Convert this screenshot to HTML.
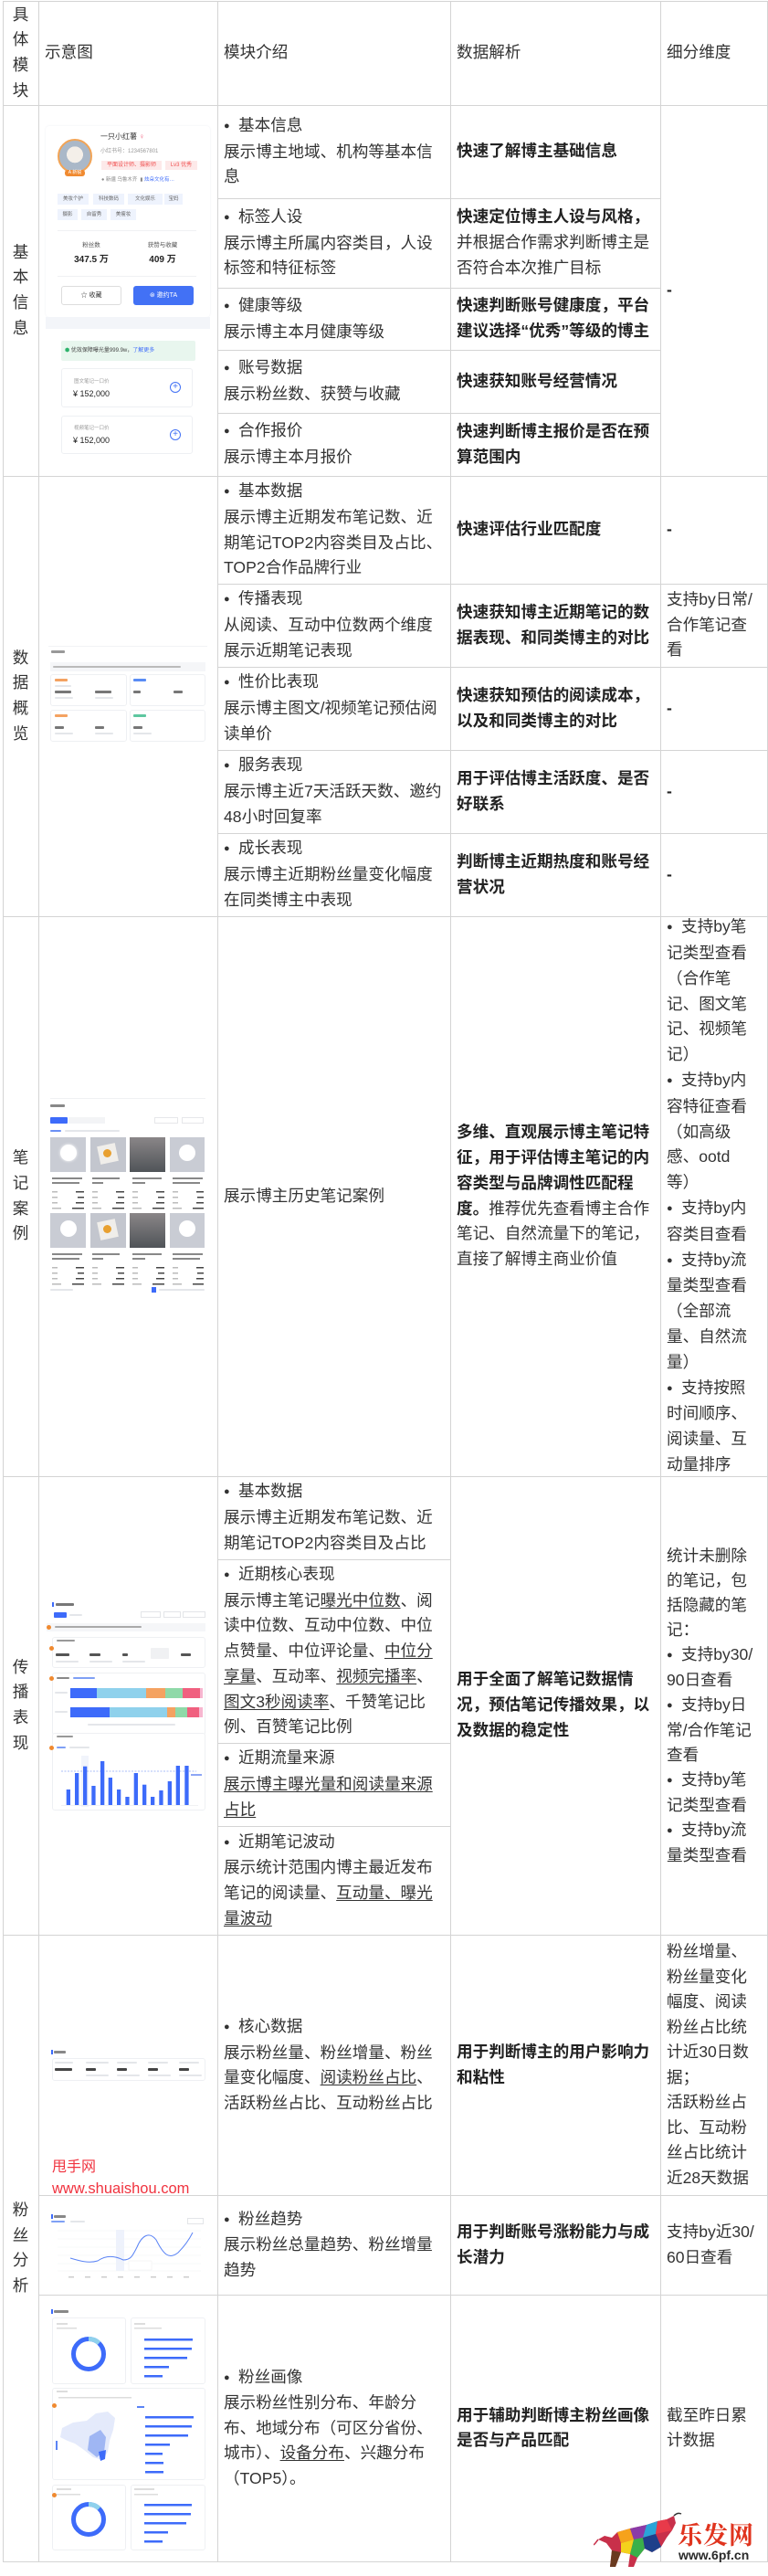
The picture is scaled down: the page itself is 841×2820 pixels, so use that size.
<!DOCTYPE html>
<html><head><meta charset="utf-8">
<style>
*{margin:0;padding:0;box-sizing:border-box}
body{width:841px;height:2820px;background:#fff;position:relative;overflow:hidden;font-family:"Liberation Sans","Noto Sans CJK SC",sans-serif;color:#333}
.h{position:absolute;height:1px;background:#d4d4d4}
.v{position:absolute;width:1px;background:#d4d4d4}
.t{position:absolute;display:flex;flex-direction:column;justify-content:center;padding-left:7px;font-size:17.6px;line-height:27.7px;white-space:nowrap;letter-spacing:0}
.c0{text-align:center;padding-left:0;align-items:center}
.bd{font-weight:bold;color:#222}
.b{display:inline-block;width:16px;font-size:11px;vertical-align:2px}
u{text-decoration:underline;text-underline-offset:2px}
.a{position:absolute}
.g{position:absolute;background:#e4e6ea;border-radius:1px}
.tx{position:absolute;font-size:7px;line-height:8px;white-space:nowrap;color:#555}
.bx{position:absolute;border:1px solid #eef0f3;border-radius:3px;background:#fff}
</style></head><body>

<!-- grid lines -->
<div class="h" style="left:3px;width:838px;top:1px"></div>
<div class="h" style="left:3px;width:838px;top:115px"></div>
<div class="h" style="left:238px;width:485px;top:217px"></div>
<div class="h" style="left:238px;width:485px;top:315px"></div>
<div class="h" style="left:238px;width:485px;top:383px"></div>
<div class="h" style="left:238px;width:485px;top:452px"></div>
<div class="h" style="left:3px;width:838px;top:521px"></div>
<div class="h" style="left:238px;width:603px;top:639px"></div>
<div class="h" style="left:238px;width:603px;top:730px"></div>
<div class="h" style="left:238px;width:603px;top:821px"></div>
<div class="h" style="left:238px;width:603px;top:912px"></div>
<div class="h" style="left:3px;width:838px;top:1003px"></div>
<div class="h" style="left:3px;width:838px;top:1616px"></div>
<div class="h" style="left:238px;width:255px;top:1707px"></div>
<div class="h" style="left:238px;width:255px;top:1908px"></div>
<div class="h" style="left:238px;width:255px;top:1999px"></div>
<div class="h" style="left:3px;width:838px;top:2118px"></div>
<div class="h" style="left:42px;width:799px;top:2403px"></div>
<div class="h" style="left:42px;width:799px;top:2512px"></div>
<div class="h" style="left:3px;width:838px;top:2804px"></div>
<div class="v" style="left:3px;top:1px;height:2804px"></div>
<div class="v" style="left:42px;top:1px;height:2804px"></div>
<div class="v" style="left:238px;top:1px;height:2804px"></div>
<div class="v" style="left:493px;top:1px;height:2804px"></div>
<div class="v" style="left:723px;top:1px;height:2804px"></div>
<div class="v" style="left:840px;top:1px;height:2804px"></div>

<!-- header -->
<div class="t c0" style="left:3px;top:1px;width:39px;height:114px"><div>具<br>体<br>模<br>块</div></div>
<div class="t" style="left:42px;top:1px;width:196px;height:114px"><div>示意图</div></div>
<div class="t" style="left:238px;top:1px;width:255px;height:114px"><div>模块介绍</div></div>
<div class="t" style="left:493px;top:1px;width:230px;height:114px"><div>数据解析</div></div>
<div class="t" style="left:723px;top:1px;width:117px;height:114px"><div>细分维度</div></div>

<!-- row 1 -->
<div class="t c0" style="left:3px;top:115px;width:39px;height:406px"><div>基<br>本<br>信<br>息</div></div>
<div class="t" style="left:238px;top:115px;width:255px;height:102px"><div><span class="b">●</span>基本信息<br>展示博主地域、机构等基本信<br>息</div></div>
<div class="t" style="left:238px;top:217px;width:255px;height:98px"><div><span class="b">●</span>标签人设<br>展示博主所属内容类目，人设<br>标签和特征标签</div></div>
<div class="t" style="left:238px;top:315px;width:255px;height:68px"><div><span class="b">●</span>健康等级<br>展示博主本月健康等级</div></div>
<div class="t" style="left:238px;top:383px;width:255px;height:69px"><div><span class="b">●</span>账号数据<br>展示粉丝数、获赞与收藏</div></div>
<div class="t" style="left:238px;top:452px;width:255px;height:69px"><div><span class="b">●</span>合作报价<br>展示博主本月报价</div></div>
<div class="t bd" style="left:493px;top:115px;width:230px;height:102px"><div>快速了解博主基础信息</div></div>
<div class="t" style="left:493px;top:217px;width:230px;height:98px"><div><span class="bd">快速定位博主人设与风格，</span><br>并根据合作需求判断博主是<br>否符合本次推广目标</div></div>
<div class="t bd" style="left:493px;top:315px;width:230px;height:68px"><div>快速判断账号健康度，平台<br>建议选择“优秀”等级的博主</div></div>
<div class="t bd" style="left:493px;top:383px;width:230px;height:69px"><div>快速获知账号经营情况</div></div>
<div class="t bd" style="left:493px;top:452px;width:230px;height:69px"><div>快速判断博主报价是否在预<br>算范围内</div></div>
<div class="t bd" style="left:723px;top:115px;width:117px;height:406px"><div>-</div></div>

<!-- row1 mockup -->
<div class="a" style="left:50px;top:138px;width:180px;height:209px;background:#fff;border-radius:4px;box-shadow:0 0 2px #eceef2"></div>
<div class="a" style="left:50px;top:347px;width:180px;height:13px;background:#f3f5f9"></div>
<div class="a" style="left:63px;top:152px;width:38px;height:38px;border-radius:50%;border:2px solid #f2a456;background:radial-gradient(circle at 50% 45%,#f4efe9 0 35%,#aab8c8 36% 100%)"></div>
<div class="a" style="left:71px;top:186px;width:22px;height:7px;background:#f08a30;border-radius:3px;color:#fff;font-size:5px;line-height:7px;text-align:center">A 新锐</div>
<div class="tx" style="left:110px;top:146px;font-size:8px;color:#333">一只小红薯 <span style="color:#f05a78">♀</span></div>
<div class="tx" style="left:110px;top:162px;font-size:6px;color:#999">小红书号：1234567801</div>
<div class="a" style="left:111px;top:176px;width:66px;height:10px;background:#fde9e9;color:#f05050;font-size:6px;line-height:10px;text-align:center">平面设计师、摄影师</div>
<div class="a" style="left:181px;top:176px;width:35px;height:10px;background:#fde9e9;color:#f05050;font-size:6px;line-height:10px;text-align:center">Lv3 优秀</div>
<div class="tx" style="left:111px;top:193px;font-size:5.5px;color:#888">● 新疆 乌鲁木齐 &nbsp;▮ <span style="color:#3d6bfa">炫朵文化有…</span></div>
<div class="a" style="left:63px;top:212px;width:34px;height:12px;background:#eef3fd;font-size:5.5px;line-height:12px;text-align:center;color:#666">美妆个护</div>
<div class="a" style="left:102px;top:212px;width:34px;height:12px;background:#eef3fd;font-size:5.5px;line-height:12px;text-align:center;color:#666">科技数码</div>
<div class="a" style="left:140px;top:212px;width:38px;height:12px;background:#eef3fd;font-size:5.5px;line-height:12px;text-align:center;color:#666">文化娱乐</div>
<div class="a" style="left:180px;top:212px;width:20px;height:12px;background:#eef3fd;font-size:5.5px;line-height:12px;text-align:center;color:#666">宝妈</div>
<div class="a" style="left:63px;top:229px;width:22px;height:12px;background:#eef3fd;font-size:5.5px;line-height:12px;text-align:center;color:#666">摄影</div>
<div class="a" style="left:89px;top:229px;width:28px;height:12px;background:#eef3fd;font-size:5.5px;line-height:12px;text-align:center;color:#666">自留秀</div>
<div class="a" style="left:121px;top:229px;width:28px;height:12px;background:#eef3fd;font-size:5.5px;line-height:12px;text-align:center;color:#666">美瘦妆</div>
<div class="a" style="left:63px;top:252px;width:152px;height:1px;background:#f0f1f3"></div>
<div class="tx" style="left:80px;top:265px;width:40px;text-align:center;font-size:6.5px">粉丝数</div>
<div class="tx" style="left:80px;top:279px;width:40px;text-align:center;font-size:10px;line-height:12px;font-weight:bold;color:#222">347.5 万</div>
<div class="tx" style="left:155px;top:265px;width:46px;text-align:center;font-size:6.5px">获赞与收藏</div>
<div class="tx" style="left:155px;top:279px;width:46px;text-align:center;font-size:10px;line-height:12px;font-weight:bold;color:#222">409 万</div>
<div class="a" style="left:63px;top:302px;width:152px;height:1px;background:#f0f1f3"></div>
<div class="a" style="left:67px;top:313px;width:66px;height:21px;border:1px solid #ddd;border-radius:3px;font-size:7px;line-height:19px;text-align:center;color:#333">☆ 收藏</div>
<div class="a" style="left:146px;top:313px;width:66px;height:21px;background:#4271f5;border-radius:3px;font-size:7px;line-height:21px;text-align:center;color:#fff">⊛ 邀约TA</div>
<div class="a" style="left:50px;top:360px;width:180px;height:140px;background:#fff;border-radius:4px"></div>
<div class="a" style="left:67px;top:373px;width:147px;height:22px;background:#e8f6ee;border-radius:2px;font-size:6px;line-height:22px;padding-left:4px;color:#444"><span style="color:#2bb26a">⬢</span> 优效保障曝光量999.9w，<span style="color:#3d6bfa">了解更多</span></div>
<div class="bx" style="left:67px;top:403px;width:144px;height:43px"></div>
<div class="tx" style="left:81px;top:414px;font-size:5.5px;color:#999">图文笔记一口价</div>
<div class="tx" style="left:80px;top:426px;font-size:9px;line-height:11px;color:#222">¥ 152,000</div>
<div class="a" style="left:186px;top:418px;width:12px;height:12px;border:1.3px solid #4271f5;border-radius:50%;color:#4271f5;font-size:10px;line-height:9px;text-align:center">+</div>
<div class="bx" style="left:67px;top:455px;width:144px;height:42px"></div>
<div class="tx" style="left:81px;top:465px;font-size:5.5px;color:#999">视频笔记一口价</div>
<div class="tx" style="left:80px;top:477px;font-size:9px;line-height:11px;color:#222">¥ 152,000</div>
<div class="a" style="left:186px;top:470px;width:12px;height:12px;border:1.3px solid #4271f5;border-radius:50%;color:#4271f5;font-size:10px;line-height:9px;text-align:center">+</div>

<!-- row 2 -->
<div class="t c0" style="left:3px;top:521px;width:39px;height:482px"><div>数<br>据<br>概<br>览</div></div>
<div class="t" style="left:238px;top:521px;width:255px;height:118px"><div><span class="b">●</span>基本数据<br>展示博主近期发布笔记数、近<br>期笔记TOP2内容类目及占比、<br>TOP2合作品牌行业</div></div>
<div class="t" style="left:238px;top:639px;width:255px;height:91px"><div><span class="b">●</span>传播表现<br>从阅读、互动中位数两个维度<br>展示近期笔记表现</div></div>
<div class="t" style="left:238px;top:730px;width:255px;height:91px"><div><span class="b">●</span>性价比表现<br>展示博主图文/视频笔记预估阅<br>读单价</div></div>
<div class="t" style="left:238px;top:821px;width:255px;height:91px"><div><span class="b">●</span>服务表现<br>展示博主近7天活跃天数、邀约<br>48小时回复率</div></div>
<div class="t" style="left:238px;top:912px;width:255px;height:91px"><div><span class="b">●</span>成长表现<br>展示博主近期粉丝量变化幅度<br>在同类博主中表现</div></div>
<div class="t bd" style="left:493px;top:521px;width:230px;height:118px"><div>快速评估行业匹配度</div></div>
<div class="t bd" style="left:493px;top:639px;width:230px;height:91px"><div>快速获知博主近期笔记的数<br>据表现、和同类博主的对比</div></div>
<div class="t bd" style="left:493px;top:730px;width:230px;height:91px"><div>快速获知预估的阅读成本，<br>以及和同类博主的对比</div></div>
<div class="t bd" style="left:493px;top:821px;width:230px;height:91px"><div>用于评估博主活跃度、是否<br>好联系</div></div>
<div class="t bd" style="left:493px;top:912px;width:230px;height:91px"><div>判断博主近期热度和账号经<br>营状况</div></div>
<div class="t bd" style="left:723px;top:521px;width:117px;height:118px"><div>-</div></div>
<div class="t" style="left:723px;top:639px;width:117px;height:91px"><div>支持by日常/<br>合作笔记查<br>看</div></div>
<div class="t bd" style="left:723px;top:730px;width:117px;height:91px"><div>-</div></div>
<div class="t bd" style="left:723px;top:821px;width:117px;height:91px"><div>-</div></div>
<div class="t bd" style="left:723px;top:912px;width:117px;height:91px"><div>-</div></div>

<!-- row2 mockup -->
<div class="a" style="left:53px;top:707px;width:174px;height:1px;background:#f2f3f5"></div>
<div class="g" style="left:56px;top:712px;width:15px;height:3px;background:#999"></div>
<div class="a" style="left:55px;top:725px;width:170px;height:10px;background:#f5f6f8"></div>
<div class="g" style="left:58px;top:729px;width:140px;height:2px;background:#bbb"></div>
<div class="bx" style="left:55px;top:738px;width:84px;height:35px"></div>
<div class="bx" style="left:142px;top:738px;width:83px;height:35px"></div>
<div class="bx" style="left:55px;top:777px;width:84px;height:35px"></div>
<div class="bx" style="left:142px;top:777px;width:83px;height:35px"></div>
<div class="g" style="left:60px;top:743px;width:14px;height:3px;background:#f4a261"></div>
<div class="g" style="left:146px;top:743px;width:14px;height:3px;background:#5a8cf5"></div>
<div class="g" style="left:60px;top:782px;width:14px;height:3px;background:#f4a261"></div>
<div class="g" style="left:146px;top:782px;width:14px;height:3px;background:#5ec7a0"></div>
<div class="g" style="left:60px;top:756px;width:18px;height:3px;background:#777"></div>
<div class="g" style="left:104px;top:756px;width:18px;height:3px;background:#777"></div>
<div class="g" style="left:146px;top:756px;width:8px;height:3px;background:#777"></div>
<div class="g" style="left:190px;top:756px;width:10px;height:3px;background:#777"></div>
<div class="g" style="left:60px;top:795px;width:10px;height:3px;background:#777"></div>
<div class="g" style="left:104px;top:795px;width:10px;height:3px;background:#777"></div>
<div class="g" style="left:146px;top:795px;width:10px;height:3px;background:#777"></div>
<div class="g" style="left:60px;top:750px;width:18px;height:2px"></div>
<div class="g" style="left:60px;top:763px;width:20px;height:2px"></div>
<div class="g" style="left:104px;top:763px;width:20px;height:2px"></div>
<div class="g" style="left:60px;top:802px;width:20px;height:2px"></div>
<div class="g" style="left:104px;top:802px;width:20px;height:2px"></div>
<div class="g" style="left:146px;top:802px;width:20px;height:2px"></div>

<!-- row 3 -->
<div class="t c0" style="left:3px;top:1003px;width:39px;height:613px"><div>笔<br>记<br>案<br>例</div></div>
<div class="t" style="left:238px;top:1003px;width:255px;height:613px"><div>展示博主历史笔记案例</div></div>
<div class="t" style="left:493px;top:1003px;width:230px;height:613px"><div><span class="bd">多维、直观展示博主笔记特<br>征，用于评估博主笔记的内<br>容类型与品牌调性匹配程<br>度。</span>推荐优先查看博主合作<br>笔记、自然流量下的笔记，<br>直接了解博主商业价值</div></div>
<div class="t" style="left:723px;top:1003px;width:117px;height:613px;line-height:27.8px"><div><span class="b">●</span>支持by笔<br>记类型查看<br>（合作笔<br>记、图文笔<br>记、视频笔<br>记）<br><span class="b">●</span>支持by内<br>容特征查看<br>（如高级<br>感、ootd<br>等）<br><span class="b">●</span>支持by内<br>容类目查看<br><span class="b">●</span>支持by流<br>量类型查看<br>（全部流<br>量、自然流<br>量）<br><span class="b">●</span>支持按照<br>时间顺序、<br>阅读量、互<br>动量排序</div></div>

<!-- row3 mockup -->
<div class="a" style="left:55px;top:1202px;width:170px;height:1px;background:#f0f1f3"></div>
<div class="g" style="left:55px;top:1209px;width:16px;height:3px;background:#888"></div>
<div class="a" style="left:55px;top:1223px;width:19px;height:7px;background:#3d6bfa;border-radius:1px"></div>
<div class="a" style="left:75px;top:1223px;width:40px;height:7px;background:#f3f4f6"></div>
<div class="a" style="left:169px;top:1223px;width:26px;height:7px;border:1px solid #e6e7ea"></div>
<div class="a" style="left:199px;top:1223px;width:24px;height:7px;border:1px solid #e6e7ea"></div>
<div class="g" style="left:55px;top:1237px;width:12px;height:2px;background:#6b90f5"></div>
<div class="g" style="left:71px;top:1237px;width:60px;height:2px"></div>

<div class="a" style="left:55px;top:1245px;width:39px;height:38px;background:#c9ccd4"></div>
<div class="a" style="left:66px;top:1253px;width:18px;height:18px;border-radius:50%;background:#fff;box-shadow:0 0 3px #fff"></div>
<div class="a" style="left:99px;top:1245px;width:39px;height:38px;background:#c3c6ce"></div>
<div class="a" style="left:108px;top:1253px;width:20px;height:20px;background:#f0eeea;transform:rotate(-12deg)"></div>
<div class="a" style="left:113px;top:1258px;width:9px;height:9px;border-radius:50%;background:#e8a030"></div>
<div class="a" style="left:142px;top:1245px;width:39px;height:38px;background:linear-gradient(#8a8688,#505458)"></div>
<div class="a" style="left:186px;top:1245px;width:38px;height:38px;background:#c9ccd4"></div>
<div class="a" style="left:196px;top:1253px;width:18px;height:18px;border-radius:50%;background:#fff"></div>

<div class="a" style="left:55px;top:1328px;width:39px;height:38px;background:#c9ccd4"></div>
<div class="a" style="left:66px;top:1336px;width:18px;height:18px;border-radius:50%;background:#fff"></div>
<div class="a" style="left:99px;top:1328px;width:39px;height:38px;background:#c3c6ce"></div>
<div class="a" style="left:108px;top:1336px;width:20px;height:20px;background:#f0eeea;transform:rotate(-12deg)"></div>
<div class="a" style="left:113px;top:1341px;width:9px;height:9px;border-radius:50%;background:#e8a030"></div>
<div class="a" style="left:142px;top:1328px;width:39px;height:38px;background:linear-gradient(#8a8688,#505458)"></div>
<div class="a" style="left:186px;top:1328px;width:38px;height:38px;background:#c9ccd4"></div>
<div class="a" style="left:196px;top:1336px;width:18px;height:18px;border-radius:50%;background:#fff"></div>

<svg class="a" style="left:55px;top:1285px" width="170" height="125">
<g fill="#888">
<rect x="2" y="4" width="33" height="2"/><rect x="46" y="4" width="30" height="2"/><rect x="90" y="4" width="32" height="2"/><rect x="134" y="4" width="33" height="2"/>
<rect x="2" y="9" width="30" height="2"/><rect x="46" y="9" width="12" height="2"/><rect x="90" y="9" width="14" height="2"/><rect x="134" y="9" width="30" height="2"/>
<rect x="2" y="87" width="33" height="2"/><rect x="46" y="87" width="30" height="2"/><rect x="90" y="87" width="32" height="2"/><rect x="134" y="87" width="33" height="2"/>
<rect x="2" y="92" width="30" height="2"/><rect x="46" y="92" width="12" height="2"/><rect x="90" y="92" width="14" height="2"/><rect x="134" y="92" width="30" height="2"/>
</g>
<g fill="#bbb">
<rect x="2" y="19" width="6" height="1.5"/><rect x="46" y="19" width="6" height="1.5"/><rect x="90" y="19" width="6" height="1.5"/><rect x="134" y="19" width="6" height="1.5"/>
<rect x="2" y="25" width="6" height="1.5"/><rect x="46" y="25" width="6" height="1.5"/><rect x="90" y="25" width="6" height="1.5"/><rect x="134" y="25" width="6" height="1.5"/>
<rect x="2" y="31" width="6" height="1.5"/><rect x="46" y="31" width="6" height="1.5"/><rect x="90" y="31" width="6" height="1.5"/><rect x="134" y="31" width="6" height="1.5"/>
<rect x="2" y="37" width="10" height="1.5"/><rect x="46" y="37" width="10" height="1.5"/><rect x="90" y="37" width="10" height="1.5"/><rect x="134" y="37" width="10" height="1.5"/>
<rect x="2" y="102" width="6" height="1.5"/><rect x="46" y="102" width="6" height="1.5"/><rect x="90" y="102" width="6" height="1.5"/><rect x="134" y="102" width="6" height="1.5"/>
<rect x="2" y="108" width="6" height="1.5"/><rect x="46" y="108" width="6" height="1.5"/><rect x="90" y="108" width="6" height="1.5"/><rect x="134" y="108" width="6" height="1.5"/>
<rect x="2" y="114" width="6" height="1.5"/><rect x="46" y="114" width="6" height="1.5"/><rect x="90" y="114" width="6" height="1.5"/><rect x="134" y="114" width="6" height="1.5"/>
<rect x="2" y="120" width="10" height="1.5"/><rect x="46" y="120" width="10" height="1.5"/><rect x="90" y="120" width="10" height="1.5"/><rect x="134" y="120" width="10" height="1.5"/>
</g>
<g fill="#444">
<rect x="28" y="19" width="9" height="1.5"/><rect x="72" y="19" width="9" height="1.5"/><rect x="116" y="19" width="9" height="1.5"/><rect x="160" y="19" width="8" height="1.5"/>
<rect x="30" y="25" width="7" height="1.5"/><rect x="74" y="25" width="7" height="1.5"/><rect x="118" y="25" width="7" height="1.5"/><rect x="161" y="25" width="7" height="1.5"/>
<rect x="28" y="31" width="9" height="1.5"/><rect x="72" y="31" width="9" height="1.5"/><rect x="116" y="31" width="9" height="1.5"/><rect x="160" y="31" width="8" height="1.5"/>
<rect x="24" y="37" width="13" height="1.5"/><rect x="68" y="37" width="13" height="1.5"/><rect x="112" y="37" width="13" height="1.5"/><rect x="156" y="37" width="12" height="1.5"/>
<rect x="28" y="102" width="9" height="1.5"/><rect x="72" y="102" width="9" height="1.5"/><rect x="116" y="102" width="9" height="1.5"/><rect x="160" y="102" width="8" height="1.5"/>
<rect x="30" y="108" width="7" height="1.5"/><rect x="74" y="108" width="7" height="1.5"/><rect x="118" y="108" width="7" height="1.5"/><rect x="161" y="108" width="7" height="1.5"/>
<rect x="28" y="114" width="9" height="1.5"/><rect x="72" y="114" width="9" height="1.5"/><rect x="116" y="114" width="9" height="1.5"/><rect x="160" y="114" width="8" height="1.5"/>
<rect x="24" y="120" width="13" height="1.5"/><rect x="68" y="120" width="13" height="1.5"/><rect x="112" y="120" width="13" height="1.5"/><rect x="156" y="120" width="12" height="1.5"/>
</g>
</svg>
<div class="g" style="left:55px;top:1411px;width:25px;height:2px"></div>
<div class="a" style="left:166px;top:1409px;width:5px;height:6px;background:#3d6bfa"></div>
<div class="g" style="left:174px;top:1411px;width:50px;height:1.5px"></div>

<!-- row 4 -->
<div class="t c0" style="left:3px;top:1616px;width:39px;height:502px"><div>传<br>播<br>表<br>现</div></div>
<div class="t" style="left:238px;top:1616px;width:255px;height:91px"><div><span class="b">●</span>基本数据<br>展示博主近期发布笔记数、近<br>期笔记TOP2内容类目及占比</div></div>
<div class="t" style="left:238px;top:1707px;width:255px;height:201px"><div><span class="b">●</span>近期核心表现<br>展示博主笔记<u>曝光中位数</u>、阅<br>读中位数、互动中位数、中位<br>点赞量、中位评论量、<u>中位分</u><br><u>享量</u>、互动率、<u>视频完播率</u>、<br><u>图文3秒阅读率</u>、千赞笔记比<br>例、百赞笔记比例</div></div>
<div class="t" style="left:238px;top:1908px;width:255px;height:91px"><div><span class="b">●</span>近期流量来源<br><u>展示博主曝光量和阅读量来源</u><br><u>占比</u></div></div>
<div class="t" style="left:238px;top:1999px;width:255px;height:119px"><div><span class="b">●</span>近期笔记波动<br>展示统计范围内博主最近发布<br>笔记的阅读量、<u>互动量、曝光</u><br><u>量波动</u></div></div>
<div class="t bd" style="left:493px;top:1616px;width:230px;height:502px"><div>用于全面了解笔记数据情<br>况，预估笔记传播效果，以<br>及数据的稳定性</div></div>
<div class="t" style="left:723px;top:1616px;width:117px;height:502px;line-height:27px"><div>统计未删除<br>的笔记，包<br>括隐藏的笔<br>记：<br><span class="b">●</span>支持by30/<br>90日查看<br><span class="b">●</span>支持by日<br>常/合作笔记<br>查看<br><span class="b">●</span>支持by笔<br>记类型查看<br><span class="b">●</span>支持by流<br>量类型查看</div></div>

<!-- row4 mockup -->
<div class="a" style="left:57px;top:1754px;width:2px;height:5px;background:#3d6bfa"></div>
<div class="g" style="left:61px;top:1755px;width:20px;height:3px;background:#777"></div>
<div class="a" style="left:59px;top:1765px;width:14px;height:6px;background:#3d6bfa;border-radius:1px"></div>
<div class="g" style="left:76px;top:1767px;width:14px;height:2px"></div>
<div class="a" style="left:154px;top:1764px;width:22px;height:7px;border:1px solid #e3e5e8"></div>
<div class="a" style="left:179px;top:1764px;width:19px;height:7px;border:1px solid #e3e5e8"></div>
<div class="a" style="left:200px;top:1764px;width:25px;height:7px;border:1px solid #e3e5e8"></div>
<div class="a" style="left:51px;top:1777px;width:174px;height:9px;background:#f5f6f8"></div>
<div class="a" style="left:51px;top:1779px;width:5px;height:5px;border-radius:50%;background:#f08a30"></div>
<div class="g" style="left:60px;top:1780px;width:95px;height:2px;background:#aaa"></div>
<div class="bx" style="left:57px;top:1792px;width:168px;height:34px"></div>
<div class="a" style="left:54px;top:1802px;width:5px;height:5px;border-radius:50%;background:#f08a30"></div>
<div class="g" style="left:62px;top:1795px;width:20px;height:2px;background:#999"></div>
<div class="g" style="left:61px;top:1810px;width:15px;height:3px;background:#555"></div>
<div class="g" style="left:98px;top:1810px;width:12px;height:3px;background:#555"></div>
<div class="g" style="left:134px;top:1810px;width:6px;height:3px;background:#555"></div>
<div class="g" style="left:198px;top:1810px;width:11px;height:3px;background:#555"></div>
<div class="g" style="left:61px;top:1818px;width:25px;height:1.5px"></div>
<div class="g" style="left:98px;top:1818px;width:25px;height:1.5px"></div>
<div class="g" style="left:134px;top:1818px;width:25px;height:1.5px"></div>
<div class="g" style="left:165px;top:1804px;width:20px;height:12px;background:#f0f1f3"></div>
<div class="bx" style="left:57px;top:1831px;width:168px;height:69px"></div>
<div class="a" style="left:54px;top:1835px;width:5px;height:5px;border-radius:50%;background:#f08a30"></div>
<div class="g" style="left:62px;top:1836px;width:14px;height:2px;background:#888"></div>
<div class="g" style="left:80px;top:1836px;width:24px;height:2px;background:#7fa0f5"></div>
<div class="a" style="left:77px;top:1848px;height:11px;width:145px;display:flex">
<div style="width:29px;background:#3d6bfa"></div><div style="width:54px;background:#8fd1ec"></div><div style="width:21px;background:#f4a261"></div><div style="width:19px;background:#8fd9a8"></div><div style="width:19px;background:#f0607f"></div><div style="width:3px;background:#f7b6d0"></div></div>
<div class="a" style="left:77px;top:1869px;height:11px;width:145px;display:flex">
<div style="width:43px;background:#3d6bfa"></div><div style="width:63px;background:#8fd1ec"></div><div style="width:9px;background:#f4a261"></div><div style="width:13px;background:#8fd9a8"></div><div style="width:13px;background:#f0607f"></div><div style="width:4px;background:#f7b6d0"></div></div>
<div class="g" style="left:60px;top:1852px;width:14px;height:2px"></div>
<div class="g" style="left:60px;top:1873px;width:14px;height:2px"></div>
<div class="g" style="left:96px;top:1887px;width:96px;height:2px"></div>
<div class="bx" style="left:57px;top:1897px;width:168px;height:85px"></div>
<div class="g" style="left:62px;top:1900px;width:18px;height:2px;background:#999"></div>
<div class="a" style="left:54px;top:1911px;width:5px;height:5px;border-radius:50%;background:#f08a30"></div>
<div class="g" style="left:62px;top:1912px;width:10px;height:2px;background:#7fa0f5"></div>
<div class="g" style="left:76px;top:1912px;width:22px;height:2px"></div>
<svg class="a" style="left:57px;top:1920px" width="168" height="62">
<rect x="32" y="2" width="8" height="56" fill="#f1f4fb"/>
<line x1="10" y1="19" x2="158" y2="19" stroke="#8da6f5" stroke-width="0.7" stroke-dasharray="2,1.5"/>
<g fill="#3d6bfa">
<rect x="15.7" y="39" width="4.3" height="17"/><rect x="25" y="21" width="4.3" height="35"/><rect x="34" y="13.7" width="4.3" height="42.3"/><rect x="43.3" y="35" width="4.3" height="21"/><rect x="53" y="8" width="4.3" height="48"/><rect x="61.7" y="26" width="4.3" height="30"/><rect x="71" y="39" width="4.3" height="17"/><rect x="80.3" y="47" width="4.3" height="9"/><rect x="89.7" y="21" width="4.3" height="35"/><rect x="99" y="33.7" width="4.3" height="22.3"/><rect x="108" y="47" width="4.3" height="9"/><rect x="117.3" y="40" width="4.3" height="16"/><rect x="126.7" y="30" width="4.3" height="26"/><rect x="135.7" y="13" width="4.3" height="43"/><rect x="145.3" y="13" width="4.3" height="43"/>
</g>
<line x1="10" y1="56.5" x2="160" y2="56.5" stroke="#e3e5e8" stroke-width="0.6"/>
<rect x="152" y="22" width="12" height="2" fill="#8da6f5"/>
</svg>

<!-- row 5 -->
<div class="t c0" style="left:3px;top:2118px;width:39px;height:686px;line-height:27.5px"><div>粉<br>丝<br>分<br>析</div></div>
<div class="t" style="left:238px;top:2118px;width:255px;height:285px;line-height:27.5px"><div><span class="b">●</span>核心数据<br>展示粉丝量、粉丝增量、粉丝<br>量变化幅度、<u>阅读粉丝占比</u>、<br>活跃粉丝占比、互动粉丝占比</div></div>
<div class="t" style="left:238px;top:2403px;width:255px;height:109px;line-height:27.5px"><div><span class="b">●</span>粉丝趋势<br>展示粉丝总量趋势、粉丝增量<br>趋势</div></div>
<div class="t" style="left:238px;top:2512px;width:255px;height:292px;line-height:27.5px"><div><span class="b">●</span>粉丝画像<br>展示粉丝性别分布、年龄分<br>布、地域分布（可区分省份、<br>城市）、<u>设备分布</u>、兴趣分布<br>（TOP5）。</div></div>
<div class="t bd" style="left:493px;top:2118px;width:230px;height:285px;line-height:27.5px"><div>用于判断博主的用户影响力<br>和粘性</div></div>
<div class="t bd" style="left:493px;top:2403px;width:230px;height:109px;line-height:27.5px"><div>用于判断账号涨粉能力与成<br>长潜力</div></div>
<div class="t bd" style="left:493px;top:2512px;width:230px;height:292px;line-height:27.5px"><div>用于辅助判断博主粉丝画像<br>是否与产品匹配</div></div>
<div class="t" style="left:723px;top:2118px;width:117px;height:285px;line-height:27.5px"><div>粉丝增量、<br>粉丝量变化<br>幅度、阅读<br>粉丝占比统<br>计近30日数<br>据；<br>活跃粉丝占<br>比、互动粉<br>丝占比统计<br>近28天数据</div></div>
<div class="t" style="left:723px;top:2403px;width:117px;height:109px;line-height:27.5px"><div>支持by近30/<br>60日查看</div></div>
<div class="t" style="left:723px;top:2512px;width:117px;height:292px;line-height:27.5px"><div>截至昨日累<br>计数据</div></div>

<!-- row5 mockup 1 -->
<div class="a" style="left:56px;top:2244px;width:1.5px;height:5px;background:#3d6bfa"></div>
<div class="g" style="left:59px;top:2245px;width:13px;height:2.5px;background:#888"></div>
<div class="bx" style="left:57px;top:2253px;width:168px;height:25px"></div>
<div class="g" style="left:60px;top:2257px;width:20px;height:1.5px"></div><div class="g" style="left:94px;top:2257px;width:25px;height:1.5px"></div><div class="g" style="left:128px;top:2257px;width:22px;height:1.5px"></div><div class="g" style="left:162px;top:2257px;width:22px;height:1.5px"></div><div class="g" style="left:196px;top:2257px;width:22px;height:1.5px"></div>
<div class="g" style="left:60px;top:2264px;width:19px;height:3px;background:#444"></div><div class="g" style="left:94px;top:2264px;width:11px;height:3px;background:#444"></div><div class="g" style="left:128px;top:2264px;width:11px;height:3px;background:#444"></div><div class="g" style="left:162px;top:2264px;width:11px;height:3px;background:#444"></div><div class="g" style="left:196px;top:2264px;width:11px;height:3px;background:#444"></div>
<div class="g" style="left:94px;top:2271px;width:25px;height:1.5px"></div><div class="g" style="left:128px;top:2271px;width:25px;height:1.5px"></div><div class="g" style="left:162px;top:2271px;width:25px;height:1.5px"></div><div class="g" style="left:196px;top:2271px;width:25px;height:1.5px"></div>
<div class="a" style="left:57px;top:2364px;font-size:16px;line-height:18px;color:#f0333f;white-space:nowrap">甩手网</div>
<div class="a" style="left:57px;top:2387px;font-size:16.5px;line-height:18px;color:#f0333f;white-space:nowrap">www.shuaishou.com</div>

<!-- row5 mockup 2 -->
<div class="a" style="left:56px;top:2424px;width:1.5px;height:5px;background:#3d6bfa"></div>
<div class="g" style="left:59px;top:2425px;width:13px;height:2.5px;background:#888"></div>
<div class="g" style="left:56px;top:2431px;width:15px;height:2px;background:#7fa0f5"></div>
<div class="g" style="left:77px;top:2431px;width:16px;height:2px"></div>
<div class="a" style="left:205px;top:2428px;width:18px;height:7px;border:1px solid #e3e5e8"></div>
<svg class="a" style="left:55px;top:2440px" width="170" height="65">
<rect x="72" y="1" width="9" height="45" fill="#eef2fc"/>
<g stroke="#f0f1f3" stroke-width="0.6"><line x1="8" y1="2" x2="165" y2="2"/><line x1="8" y1="11" x2="165" y2="11"/><line x1="8" y1="20" x2="165" y2="20"/><line x1="8" y1="29" x2="165" y2="29"/><line x1="8" y1="38" x2="165" y2="38"/><line x1="8" y1="46" x2="165" y2="46"/></g>
<path d="M22 32 C32 35,42 38,52 35 C62 28,72 30,80 34 C88 34,90 30,95 20 C100 8,108 2,116 12 C124 28,130 34,140 26 C148 18,152 12,156 4" fill="none" stroke="#5b84f5" stroke-width="1"/>
<rect x="86" y="35" width="25" height="10" fill="#fff" stroke="#eee" stroke-width="0.5"/>
<g fill="#ccc"><rect x="20" y="52" width="6" height="1.5"/><rect x="38" y="52" width="6" height="1.5"/><rect x="56" y="52" width="6" height="1.5"/><rect x="74" y="52" width="6" height="1.5"/><rect x="92" y="52" width="6" height="1.5"/><rect x="110" y="52" width="6" height="1.5"/><rect x="128" y="52" width="6" height="1.5"/><rect x="146" y="52" width="6" height="1.5"/></g>
</svg>

<!-- row5 mockup 3 -->
<div class="a" style="left:56px;top:2528px;width:1.5px;height:5px;background:#3d6bfa"></div>
<div class="g" style="left:59px;top:2529px;width:16px;height:2.5px;background:#888"></div>
<div class="bx" style="left:57px;top:2537px;width:81px;height:73px"></div>
<div class="bx" style="left:143px;top:2537px;width:82px;height:73px"></div>
<div class="bx" style="left:57px;top:2614px;width:168px;height:101px"></div>
<div class="bx" style="left:57px;top:2720px;width:81px;height:72px"></div>
<div class="bx" style="left:143px;top:2720px;width:82px;height:72px"></div>
<svg class="a" style="left:0;top:0" width="841" height="2820">
<g fill="none" stroke-width="5">
<circle cx="97" cy="2577" r="16.5" stroke="#3d6bfa"/>
<path d="M97 2560.5 A16.5 16.5 0 0 1 108.5 2565" stroke="#8fd1ec"/>
<circle cx="97" cy="2758" r="16.5" stroke="#3d6bfa"/>
<path d="M97 2741.5 A16.5 16.5 0 0 1 108.5 2746" stroke="#8fd1ec"/>
</g>
<g fill="#3d6bfa">
<rect x="158" y="2560" width="53" height="2.5"/><rect x="158" y="2570" width="52" height="2.5"/><rect x="158" y="2580" width="47" height="2.5"/><rect x="158" y="2590" width="27" height="2.5"/><rect x="158" y="2600" width="20" height="2.5"/>
<rect x="159" y="2645" width="53" height="2.5"/><rect x="159" y="2655" width="51" height="2.5"/><rect x="159" y="2665" width="47" height="2.5"/><rect x="159" y="2675" width="27" height="2.5"/><rect x="159" y="2685" width="19" height="2.5"/><rect x="159" y="2695" width="20" height="2.5"/><rect x="159" y="2705" width="20" height="2.5"/>
<rect x="158" y="2741" width="52" height="2.5"/><rect x="158" y="2751" width="51" height="2.5"/><rect x="158" y="2761" width="46" height="2.5"/><rect x="158" y="2771" width="26" height="2.5"/><rect x="158" y="2781" width="20" height="2.5"/>
</g>
<rect x="57" y="2631" width="5" height="5" rx="2.5" fill="#f08a30"/>
<rect x="57" y="2729" width="5" height="5" rx="2.5" fill="#f08a30"/>
<g fill="#ddd"><rect x="62" y="2543" width="12" height="2"/><rect x="62" y="2548" width="22" height="1.5"/><rect x="147" y="2543" width="12" height="2"/><rect x="147" y="2548" width="30" height="1.5"/><rect x="62" y="2617" width="12" height="2"/><rect x="64" y="2624" width="80" height="1.5"/><rect x="62" y="2724" width="16" height="2"/><rect x="62" y="2730" width="26" height="1.5"/><rect x="147" y="2724" width="22" height="2"/><rect x="147" y="2730" width="26" height="1.5"/></g>
<path d="M68 2658 L80 2652 L95 2650 L105 2642 L118 2640 L126 2647 L124 2660 L120 2672 L118 2684 L112 2693 L102 2690 L92 2682 L82 2675 L74 2672 L66 2668 Z" fill="#e4eafb"/>
<path d="M98 2667 L110 2660 L116 2668 L114 2684 L106 2690 L96 2682 Z" fill="#9fb6f3"/>
<path d="M108 2684 L116 2682 L115 2692 L110 2694 Z" fill="#3d6bfa"/>
<rect x="61" y="2672" width="2" height="10" fill="#5b84f5"/>
<rect x="150" y="2634" width="8" height="2" fill="#5b84f5"/>
</svg>

<!-- logo bottom right -->
<svg class="a" style="left:650px;top:2750px" width="100" height="62">
<polygon points="5,30 12,26 20,28 26,22 40,18 58,14 70,10 80,8 88,4 90,12 86,20 80,28 74,38 64,44 56,40 48,50 44,60 38,60 40,46 30,44 24,60 18,60 20,42 14,34" fill="#c8304a"/>
<polygon points="26,22 40,18 44,30 30,34" fill="#f6a21c"/>
<polygon points="40,18 58,14 54,28 44,30" fill="#8a3aa8"/>
<polygon points="58,14 70,10 68,24 54,28" fill="#2aa4d8"/>
<polygon points="70,10 80,8 86,20 68,24" fill="#e83a4a"/>
<polygon points="30,34 44,30 40,46 30,44" fill="#f4d21c"/>
<polygon points="44,30 54,28 56,40 48,50 40,46" fill="#3ab04a"/>
<polygon points="54,28 68,24 74,38 64,44 56,40" fill="#1e3f8a"/>
<polygon points="20,42 30,44 24,60 18,60" fill="#6a3a20"/>
<polyline points="5,30 2,34 0,36" stroke="#c8304a" stroke-width="1.5" fill="none"/>
<path d="M88 4 Q92 0 96 2" stroke="#333" stroke-width="1.5" fill="none"/>
</svg>
<div class="a" style="left:742px;top:2758px;font-size:27px;line-height:32px;color:#e0341e;font-weight:bold;font-family:'Noto Serif CJK SC','Noto Sans CJK SC',serif;letter-spacing:1px;white-space:nowrap">乐发网</div>
<div class="a" style="left:743px;top:2790px;font-size:14px;line-height:15px;color:#2a2a2a;font-weight:bold;white-space:nowrap">www.6pf.cn</div>

</body></html>
